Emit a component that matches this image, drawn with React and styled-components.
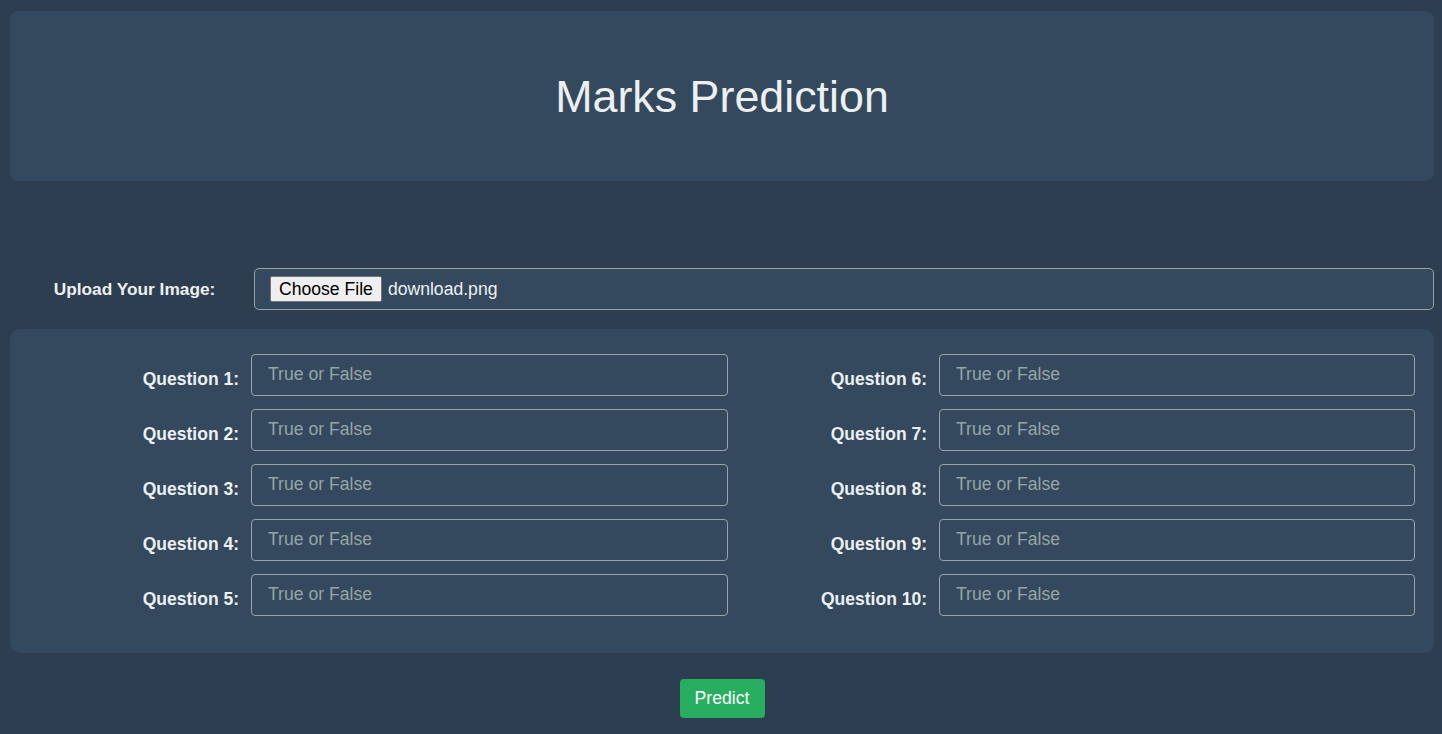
import React from 'react';
import styled, { createGlobalStyle } from 'styled-components';

const GlobalStyle = createGlobalStyle`
  body {
    margin: 0;
    background-color: #2c3e50;
    font-family: 'Liberation Sans', Arial, sans-serif;
    color: #ecf0f1;
  }
`;

const Page = styled.div`
  padding: 11px 8px 16px 10px;
  display: flex;
  flex-direction: column;
`;

const Header = styled.header`
  height: 170px;
  background-color: #34495e;
  border-radius: 8px;
  display: flex;
  align-items: center;
  justify-content: center;
`;

const Title = styled.h1`
  margin: 0;
  font-size: 44.8px;
  font-weight: normal;
  color: #ecf0f1;
`;

const UploadRow = styled.div`
  margin-top: 87px;
  display: grid;
  grid-template-columns: 244px 1fr;
  align-items: center;
`;

const UploadLabel = styled.label`
  font-size: 17.3px;
  font-weight: bold;
  text-align: center;
  padding-left: 5px;
`;

const FileBox = styled.div`
  height: 42px;
  box-sizing: border-box;
  border: 1px solid #95a5a6;
  border-radius: 5px;
  background-color: #34495e;
  padding: 0 15px;
  display: flex;
  align-items: center;
  gap: 6px;
  font-size: 17.6px;
`;

const ChooseButton = styled.span`
  height: 26px;
  box-sizing: border-box;
  padding: 0 8px;
  display: flex;
  align-items: center;
  background-color: #efefef;
  border: 1px solid #767676;
  border-radius: 2px;
  color: #000;
  font-size: 17.6px;
`;

const FileName = styled.span`
  color: #ecf0f1;
`;

const QuestionPanel = styled.section`
  margin-top: 19px;
  background-color: #34495e;
  border-radius: 10px;
  padding: 25px 19px 37px 0;
  display: grid;
  grid-template-columns: 1fr 477px 187px 476px;
  column-gap: 12px;
  row-gap: 13px;
  align-items: center;
`;

const QuestionLabel = styled.label`
  font-size: 17.5px;
  font-weight: bold;
  text-align: right;
  padding-top: 9px;
`;

const Answer = styled.input`
  height: 42px;
  box-sizing: border-box;
  border: 1px solid #95a5a6;
  border-radius: 4px;
  background-color: #34495e;
  color: #ecf0f1;
  padding: 0 16px 1px;
  font-family: 'Liberation Sans', Arial, sans-serif;
  font-size: 17.6px;
  outline: none;

  &::placeholder {
    color: #95a5a6;
  }
`;

const Footer = styled.div`
  margin-top: 26px;
  display: flex;
  justify-content: center;
`;

const PredictButton = styled.button`
  width: 85px;
  height: 39px;
  padding: 0;
  background-color: #27ae60;
  color: #fff;
  border: none;
  border-radius: 4px;
  font-family: 'Liberation Sans', Arial, sans-serif;
  font-size: 17.6px;
  cursor: pointer;
`;

const pairs = [1, 2, 3, 4, 5].map((n) => [n, n + 5]);

const App = () => {
  return (
    <>
      <GlobalStyle />
      <Page>
        <Header>
          <Title>Marks Prediction</Title>
        </Header>

        <UploadRow>
          <UploadLabel>Upload Your Image:</UploadLabel>
          <FileBox>
            <ChooseButton>Choose File</ChooseButton>
            <FileName>download.png</FileName>
          </FileBox>
        </UploadRow>

        <QuestionPanel>
          {pairs.map(([a, b]) => (
            <React.Fragment key={a}>
              <QuestionLabel htmlFor={`q${a}`}>Question {a}:</QuestionLabel>
              <Answer id={`q${a}`} placeholder="True or False" />
              <QuestionLabel htmlFor={`q${b}`}>Question {b}:</QuestionLabel>
              <Answer id={`q${b}`} placeholder="True or False" />
            </React.Fragment>
          ))}
        </QuestionPanel>

        <Footer>
          <PredictButton>Predict</PredictButton>
        </Footer>
      </Page>
    </>
  );
};

export default App;
